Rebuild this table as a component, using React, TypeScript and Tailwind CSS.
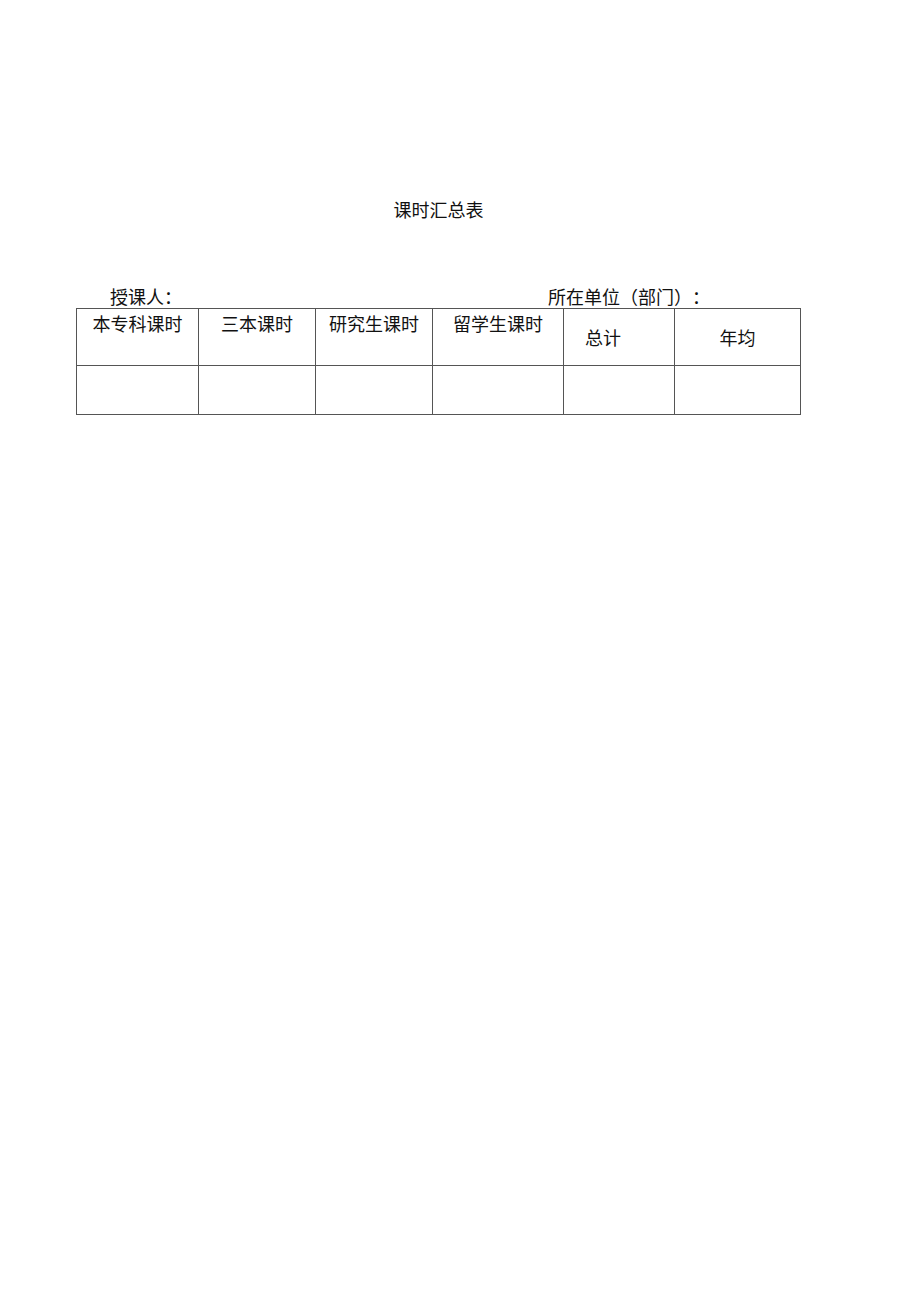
export default function App() {
  const cols = [
    { label: '本专科课时', w: 'w-[122px]', top: true, extra: '' },
    { label: '三本课时', w: 'w-[117px]', top: true, extra: '' },
    { label: '研究生课时', w: 'w-[117px]', top: true, extra: '' },
    { label: '留学生课时', w: 'w-[131px]', top: true, extra: '' },
    { label: '总计', w: 'w-[111px]', top: false, extra: 'pr-[32px]' },
    { label: '年均', w: 'w-[126px]', top: false, extra: '' },
  ];

  return (
    <div
      className="min-h-[1301px] w-[920px] bg-white text-[#111] text-[18px] leading-[26px] [text-spacing-trim:space-all]"
      style={{ fontFamily: '"Liberation Serif", "Noto Sans CJK SC", serif' }}
    >
      <div className="ml-[76px] w-[725px] pt-[198px]">
        <h1 className="text-center font-normal">课时汇总表</h1>

        <div className="mt-[61px] flex h-[23px]">
          <span className="ml-[34px]">授课人：</span>
          <span className="ml-[366px]">所在单位（部门）：</span>
        </div>

        <table className="border-collapse table-fixed w-[725px]">
          <tbody>
            <tr className="h-[57px]">
              {cols.map((c, i) => (
                <td
                  key={i}
                  className={`${c.w} border border-[#555] text-center p-0 ${
                    c.top ? 'align-top pt-[3px]' : 'align-middle pt-[3px]'
                  } ${c.extra} ${i === 4 ? 'border-l-[#7a3f7a]' : ''}`}
                >
                  {c.label}
                </td>
              ))}
            </tr>
            <tr className="h-[49px]">
              {cols.map((c, i) => (
                <td
                  key={i}
                  className={`border border-[#555] p-0 ${i === 4 ? 'border-l-[#7a3f7a]' : ''}`}
                />
              ))}
            </tr>
          </tbody>
        </table>
      </div>
    </div>
  );
}
